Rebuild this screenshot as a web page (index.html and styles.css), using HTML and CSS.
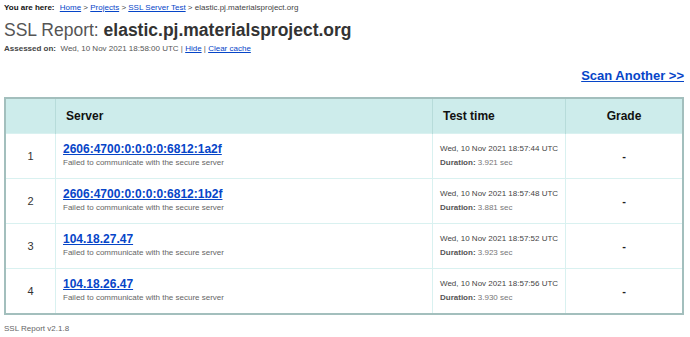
FILE: index.html
```html
<!DOCTYPE html>
<html lang="en">
<head>
    <meta charset="UTF-8">
    <meta name="viewport" content="width=device-width, initial-scale=1.0">
    <title>SSL Server Test: elastic.pj.materialsproject.org</title>
    <link rel="stylesheet" href="styles.css">
</head>
<body>

    <div class="crumbs">
        <b>You are here:</b>
        <a href="#">Home</a> &gt; <a href="#">Projects</a> &gt; <a href="#">SSL Server Test</a> &gt; elastic.pj.materialsproject.org
    </div>

    <h1 class="title"><span class="title-label">SSL Report:</span> elastic.pj.materialsproject.org</h1>

    <div class="assessed">
        <b>Assessed on:</b>&nbsp; Wed, 10 Nov 2021 18:58:00 UTC | <a href="#">Hide</a> | <a href="#">Clear cache</a>
    </div>

    <div class="scan-another">
        <a href="#">Scan Another &gt;&gt;</a>
    </div>

    <table class="report">
        <thead>
            <tr>
                <th class="col-num"></th>
                <th class="col-server">Server</th>
                <th class="col-time">Test time</th>
                <th class="col-grade">Grade</th>
            </tr>
        </thead>
        <tbody>
            <tr>
                <td class="col-num">1</td>
                <td class="col-server">
                    <a class="ip" href="#">2606:4700:0:0:0:0:6812:1a2f</a>
                    <div class="status">Failed to communicate with the secure server</div>
                </td>
                <td class="col-time">
                    <div>Wed, 10 Nov 2021 18:57:44 UTC</div>
                    <div class="duration"><b>Duration:</b> 3.921 sec</div>
                </td>
                <td class="col-grade">-</td>
            </tr>
            <tr>
                <td class="col-num">2</td>
                <td class="col-server">
                    <a class="ip" href="#">2606:4700:0:0:0:0:6812:1b2f</a>
                    <div class="status">Failed to communicate with the secure server</div>
                </td>
                <td class="col-time">
                    <div>Wed, 10 Nov 2021 18:57:48 UTC</div>
                    <div class="duration"><b>Duration:</b> 3.881 sec</div>
                </td>
                <td class="col-grade">-</td>
            </tr>
            <tr>
                <td class="col-num">3</td>
                <td class="col-server">
                    <a class="ip" href="#">104.18.27.47</a>
                    <div class="status">Failed to communicate with the secure server</div>
                </td>
                <td class="col-time">
                    <div>Wed, 10 Nov 2021 18:57:52 UTC</div>
                    <div class="duration"><b>Duration:</b> 3.923 sec</div>
                </td>
                <td class="col-grade">-</td>
            </tr>
            <tr>
                <td class="col-num">4</td>
                <td class="col-server">
                    <a class="ip" href="#">104.18.26.47</a>
                    <div class="status">Failed to communicate with the secure server</div>
                </td>
                <td class="col-time">
                    <div>Wed, 10 Nov 2021 18:57:56 UTC</div>
                    <div class="duration"><b>Duration:</b> 3.930 sec</div>
                </td>
                <td class="col-grade">-</td>
            </tr>
        </tbody>
    </table>

    <div class="footer">SSL Report v2.1.8</div>

</body>
</html>
```

FILE: styles.css
```css
body {
    font-family: "Liberation Sans", Arial, sans-serif;
    background: #ffffff;
    color: #333;
    margin: 0;
    padding: 0 6px 0 4px;
}
a {
    color: #0645c8;
}
.crumbs {
    font-size: 8px;
    color: #444;
    line-height: 16px;
}
.crumbs b {
    color: #111;
    margin-right: 3px;
}
.title {
    margin: 2px 0 0 0;
    font-size: 17.5px;
    line-height: 24px;
    font-weight: bold;
    color: #333;
}
.title-label {
    font-weight: normal;
    color: #555;
}
.assessed {
    font-size: 8px;
    color: #555;
    line-height: 14px;
}
.assessed b {
    color: #444;
}
.scan-another {
    text-align: right;
    margin-top: 12px;
    font-size: 13px;
    font-weight: bold;
    line-height: 16px;
}
.report {
    width: 100%;
    border-collapse: collapse;
    border: 2px solid #a3bfbd;
    margin-top: 13px;
}
.report th {
    background: #cdeceb;
    color: #111;
    font-size: 12px;
    text-align: left;
    height: 34px;
    padding: 0 0 0 10px;
    border-left: 1px solid #b7dcda;
}
.report td {
    border-top: 1px solid #d9f1f0;
    border-left: 1px solid #d9f1f0;
    height: 44px;
    padding: 0 0 0 7px;
    vertical-align: middle;
}
.report th:first-child,
.report td:first-child {
    border-left: none;
}
.report .col-num {
    width: 49px;
    text-align: center;
    font-size: 11px;
    color: #333;
    padding: 0;
}
.report th.col-grade,
.report td.col-grade {
    width: 116px;
    text-align: center;
    padding: 0;
}
.report td.col-grade {
    font-size: 11px;
    font-weight: bold;
    color: #222;
}
.report .col-time {
    width: 122px;
}
.report td.col-time {
    font-size: 8px;
    color: #444;
    line-height: 12px;
}
.duration {
    margin-top: 2px;
    color: #777;
}
.duration b {
    color: #555;
}
.ip {
    font-size: 12px;
    font-weight: bold;
    line-height: 16px;
}
.status {
    font-size: 8px;
    color: #666;
    line-height: 12px;
    margin-bottom: 4px;
}
.footer {
    font-size: 8px;
    color: #666;
    line-height: 12px;
    margin-top: 8px;
}
```
